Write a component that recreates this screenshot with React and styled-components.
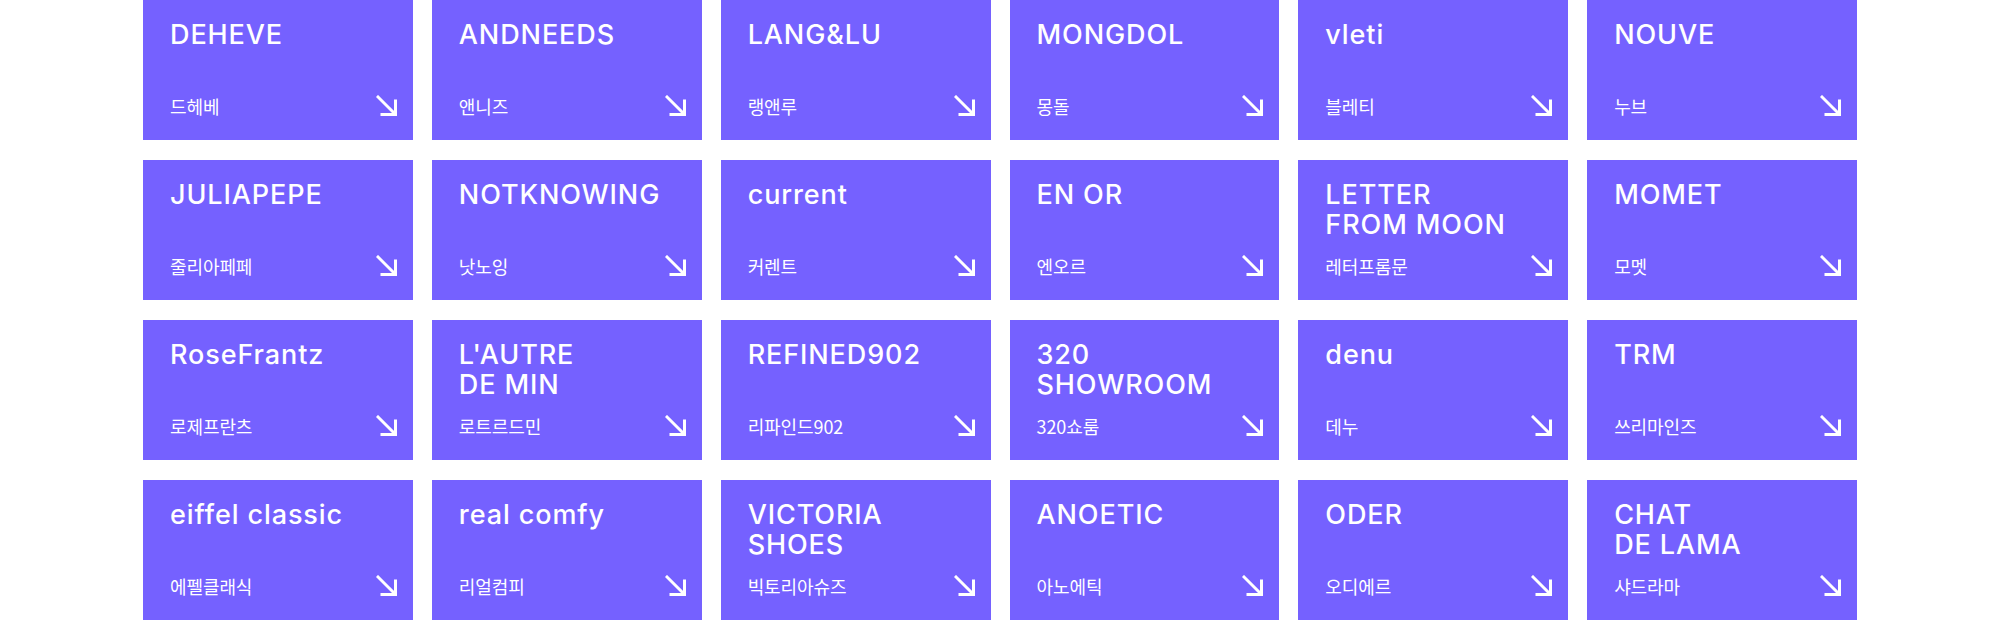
import React from "react";
import styled, { createGlobalStyle } from "styled-components";

const Global = createGlobalStyle`
  html, body { margin: 0; padding: 0; background: #ffffff; }
  body { font-family: Inter, "Noto Sans", "Noto Sans CJK KR", sans-serif; }
`;

const brands = [
  ["DEHEVE", "드헤베"],
  ["ANDNEEDS", "앤니즈"],
  ["LANG&LU", "랭앤루"],
  ["MONGDOL", "몽돌"],
  ["vleti", "블레티"],
  ["NOUVE", "누브"],
  ["JULIAPEPE", "줄리아페페"],
  ["NOTKNOWING", "낫노잉"],
  ["current", "커렌트"],
  ["EN OR", "엔오르"],
  ["LETTER\nFROM MOON", "레터프롬문"],
  ["MOMET", "모멧"],
  ["RoseFrantz", "로제프란츠"],
  ["L'AUTRE\nDE MIN", "로트르드민"],
  ["REFINED902", "리파인드902"],
  ["320\nSHOWROOM", "320쇼룸"],
  ["denu", "데누"],
  ["TRM", "쓰리마인즈"],
  ["eiffel classic", "에펠클래식"],
  ["real comfy", "리얼컴피"],
  ["VICTORIA\nSHOES", "빅토리아슈즈"],
  ["ANOETIC", "아노에틱"],
  ["ODER", "오디에르"],
  ["CHAT\nDE LAMA", "샤드라마"],
];

const Page = styled.div`
  display: flex;
  justify-content: center;
  padding-bottom: 20px;
`;

const Grid = styled.div`
  width: 1714px;
  display: grid;
  grid-template-columns: repeat(6, 1fr);
  column-gap: 19px;
  row-gap: 20px;
`;

const Card = styled.a`
  height: 140px;
  box-sizing: border-box;
  background: #7561ff;
  color: #ffffff;
  text-decoration: none;
  display: flex;
  flex-direction: column;
  justify-content: space-between;
  padding: 20px 15px 23px 27px;
`;

const Title = styled.div`
  font-family: Inter, "Noto Sans", sans-serif;
  font-size: 27px;
  font-weight: 500;
  line-height: 30px;
  letter-spacing: 0.9px;
  white-space: pre-line;
`;

const Bottom = styled.div`
  display: flex;
  align-items: center;
  justify-content: space-between;
`;

const Korean = styled.span`
  font-family: "Noto Sans CJK KR", "Noto Sans", sans-serif;
  font-size: 18px;
  font-weight: 400;
  line-height: 22px;
  letter-spacing: -0.1px;
`;

const Arrow = () => (
  <svg width="22" height="22" viewBox="0 0 22 22" fill="none">
    <path d="M2 2 L19 19" stroke="#fff" strokeWidth="3" strokeLinecap="square" />
    <path d="M6 19.5 H19.5 V6" stroke="#fff" strokeWidth="3" strokeLinecap="square" />
  </svg>
);

export default function App() {
  return (
    <>
      <Global />
      <Page>
        <Grid>
          {brands.map(([en, ko]) => (
            <Card key={en} href="#">
              <Title>{en}</Title>
              <Bottom>
                <Korean>{ko}</Korean>
                <Arrow />
              </Bottom>
            </Card>
          ))}
        </Grid>
      </Page>
    </>
  );
}
